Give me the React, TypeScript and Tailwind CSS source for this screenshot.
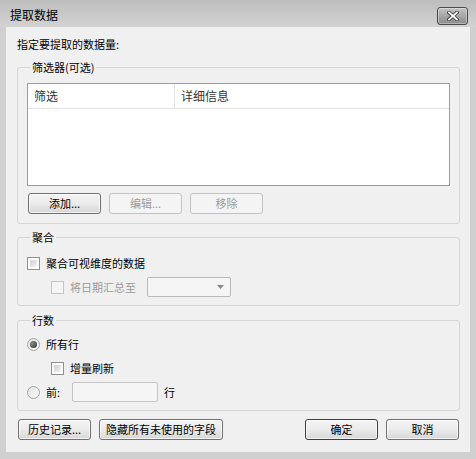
import React from "react";

const font = { fontFamily: '"Noto Sans CJK SC", "Noto Sans", sans-serif' };

function Btn({ children, w = "w-[73px]", disabled = false, def = false }: { children: React.ReactNode; w?: string; disabled?: boolean; def?: boolean }) {
  if (disabled) {
    return (
      <div className={`${w} h-[21px] rounded-[3px] border border-[#c2c2c2] bg-[#f4f4f4] flex items-center justify-center text-[11px] text-[#9a9a9a] leading-none`}>
        {children}
      </div>
    );
  }
  return (
    <div
      className={`${w} h-[21px] rounded-[3px] border ${def ? "border-[#3c3c3c]" : "border-[#707070]"} bg-gradient-to-b from-[#f4f4f4] via-[#ebebeb] to-[#d6d6d6] flex items-center justify-center text-[11px] text-black leading-none shadow-[inset_0_0_0_1px_rgba(255,255,255,0.7)]`}
    >
      {children}
    </div>
  );
}

function Check({ disabled = false }: { disabled?: boolean }) {
  return (
    <div className={`w-[13px] h-[13px] border ${disabled ? "border-[#c4c4c4] bg-[#f6f6f6]" : "border-[#8e8f8f] bg-white"} p-[2px] shrink-0`}>
      <div className={`w-full h-full ${disabled ? "bg-[#f4f4f4]" : "bg-gradient-to-br from-[#cfcfcf] to-[#f4f4f4]"}`} />
    </div>
  );
}

function Radio({ on = false }: { on?: boolean }) {
  return (
    <div className="w-[13px] h-[13px] rounded-full border border-[#a3a3a3] bg-gradient-to-br from-[#e2e2e2] to-[#fafafa] flex items-center justify-center shrink-0">
      {on && <div className="w-[7px] h-[7px] rounded-full bg-[radial-gradient(circle_at_35%_35%,#8a8a8a,#2a2a2a)]" />}
    </div>
  );
}

function Group({ title, children, cls = "" }: { title: string; children: React.ReactNode; cls?: string }) {
  return (
    <fieldset className={`ml-[11px] w-[443px] border border-[#d5d5d5] rounded-[3px] px-[9px] ${cls}`}>
      <legend className="ml-[3px] px-[2px] h-[16px] leading-[16px] text-[11px] text-black">{title}</legend>
      {children}
    </fieldset>
  );
}

export default function App() {
  return (
    <div style={font} className="w-[476px] h-[459px] bg-[#d0d0d0] flex flex-col overflow-hidden">
      <div className="h-[27px] shrink-0 bg-gradient-to-b from-[#bdbdbd] to-[#d3d3d3] flex items-start justify-between pl-[10px] pr-[8px]">
        <div className="mt-[6px] text-[12px] leading-[18px] text-black">提取数据</div>
        <div className="mt-[7px] w-[31px] h-[18px] rounded-[3px] border border-[#4a4a4a] bg-gradient-to-b from-[#c4c4c4] via-[#a6a6a6] to-[#8c8c8c] flex items-center justify-center shadow-[inset_0_0_0_1px_rgba(255,255,255,0.35)]">
          <svg width="12" height="10" viewBox="0 0 12 10">
            <path d="M2 1.5 L10 8.5 M10 1.5 L2 8.5" stroke="#3a3a3a" strokeWidth="3.6" strokeLinecap="square" />
            <path d="M2 1.5 L10 8.5 M10 1.5 L2 8.5" stroke="#ffffff" strokeWidth="1.8" strokeLinecap="square" />
          </svg>
        </div>
      </div>
      <div className="mx-[6px] h-[425px] shrink-0 bg-[#f0f0f0] flex flex-col">
        <div className="mt-[9px] ml-[11px] h-[16px] leading-[16px] text-[11px] text-black">指定要提取的数据量:</div>

        <Group title="筛选器(可选)" cls="mt-[7px] pb-[9px]">
          <div className="mt-[8px] h-[103px] border border-[#9c9c9c] bg-white flex flex-col">
            <div className="h-[25px] border-b border-[#e3e3e3] flex text-[12px] text-[#333]">
              <div className="w-[147px] border-r border-[#e3e3e3] pl-[6px] flex items-center">筛选</div>
              <div className="pl-[6px] flex items-center">详细信息</div>
            </div>
          </div>
          <div className="mt-[7px] flex gap-[8px] pl-[1px]">
            <Btn>添加...</Btn>
            <Btn disabled>编辑...</Btn>
            <Btn disabled>移除</Btn>
          </div>
        </Group>

        <Group title="聚合" cls="mt-[5px] pb-[8px]">
          <div className="mt-[10px] h-[16px] flex items-center gap-[6px] text-[11px] text-black">
            <Check />
            <span>聚合可视维度的数据</span>
          </div>
          <div className="mt-[6px] h-[20px] flex items-center pl-[24px] text-[11px] text-[#9a9a9a]">
            <Check disabled />
            <span className="ml-[6px]">将日期汇总至</span>
            <div className="ml-[11px] w-[84px] h-[20px] rounded-[2px] border border-[#b9b9b9] bg-[#f5f5f5] flex items-center justify-end pr-[6px]">
              <svg width="7" height="4" viewBox="0 0 7 4"><path d="M0 0 H7 L3.5 4 Z" fill="#8a8a8a" /></svg>
            </div>
          </div>
        </Group>

        <Group title="行数" cls="mt-[6px] pb-[8px]">
          <div className="mt-[8px] h-[16px] flex items-center gap-[6px] text-[11px] text-black">
            <Radio on />
            <span>所有行</span>
          </div>
          <div className="mt-[8px] h-[16px] flex items-center gap-[6px] pl-[24px] text-[11px] text-black">
            <Check />
            <span>增量刷新</span>
          </div>
          <div className="mt-[6px] h-[20px] flex items-center text-[11px] text-black">
            <Radio />
            <span className="ml-[6px] w-[26px] shrink-0">前:</span>
            <div className="w-[86px] h-[20px] rounded-[2px] border border-[#c4c4c4] bg-[#f5f5f5]" />
            <span className="ml-[6px]">行</span>
          </div>
        </Group>

        <div className="mt-[8px] ml-[12px] flex">
          <Btn>历史记录...</Btn>
          <div className="ml-[8px]"><Btn w="w-[124px]">隐藏所有未使用的字段</Btn></div>
          <div className="ml-[82px]"><Btn def>确定</Btn></div>
          <div className="ml-[8px]"><Btn>取消</Btn></div>
        </div>
      </div>
    </div>
  );
}
